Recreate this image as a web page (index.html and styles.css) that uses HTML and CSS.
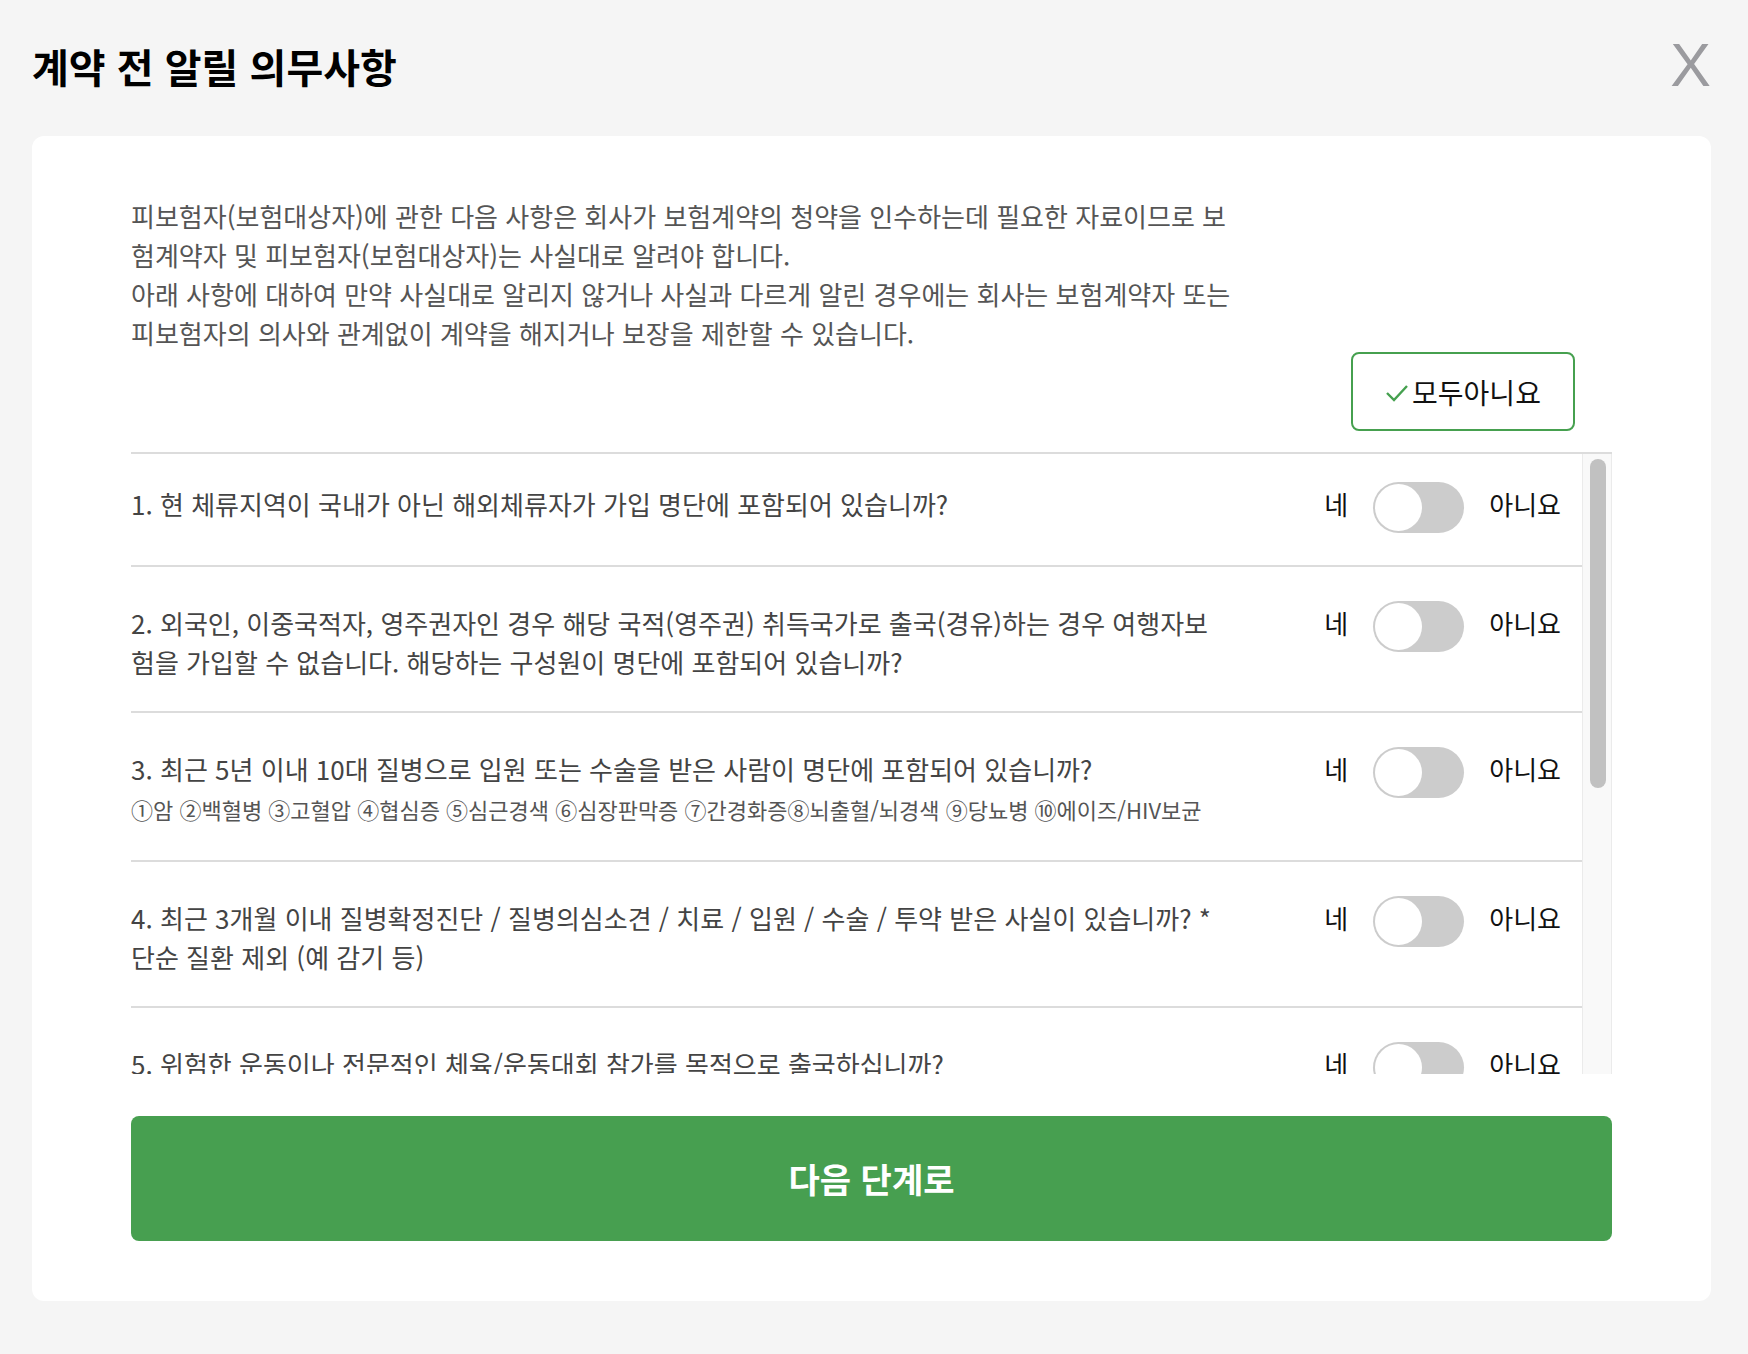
FILE: index.html
```html
<!DOCTYPE html>
<html lang="ko">
<head>
  <meta charset="UTF-8">
  <title>계약 전 알릴 의무사항</title>
  <meta name="viewport" content="width=device-width, initial-scale=1.0">
  <link rel="stylesheet" href="styles.css">
</head>
<body>
  <div class="page">
    <div class="header">
      <h1 class="title">계약 전 알릴 의무사항</h1>
      <button class="close-btn" type="button">X</button>
    </div>

    <div class="card">
      <p class="intro">피보험자(보험대상자)에 관한 다음 사항은 회사가 보험계약의 청약을 인수하는데 필요한 자료이므로 보험계약자 및 피보험자(보험대상자)는 사실대로 알려야 합니다.<br>아래 사항에 대하여 만약 사실대로 알리지 않거나 사실과 다르게 알린 경우에는 회사는 보험계약자 또는 피보험자의 의사와 관계없이 계약을 해지거나 보장을 제한할 수 있습니다.</p>

      <div class="all-no-row">
        <button class="all-no-btn" type="button">
          <svg class="check" viewBox="0 0 24 18" width="24" height="18"><polyline points="2,9 9,16 22,2" fill="none" stroke="#45a04f" stroke-width="2.4"/></svg>모두아니요
        </button>
      </div>

      <div class="q-box">
        <div class="q-list">
          <div class="q-item">
            <div class="q-text">1. 현 체류지역이 국내가 아닌 해외체류자가 가입 명단에 포함되어 있습니까?</div>
            <div class="q-answer"><span class="label">네</span><span class="switch"><span class="knob"></span></span><span class="label">아니요</span></div>
          </div>
          <div class="q-item">
            <div class="q-text">2. 외국인, 이중국적자, 영주권자인 경우 해당 국적(영주권) 취득국가로 출국(경유)하는 경우 여행자보험을 가입할 수 없습니다. 해당하는 구성원이 명단에 포함되어 있습니까?</div>
            <div class="q-answer"><span class="label">네</span><span class="switch"><span class="knob"></span></span><span class="label">아니요</span></div>
          </div>
          <div class="q-item">
            <div class="q-text">3. 최근 5년 이내 10대 질병으로 입원 또는 수술을 받은 사람이 명단에 포함되어 있습니까?
              <div class="q-sub">①암 ②백혈병 ③고혈압 ④협심증 ⑤심근경색 ⑥심장판막증 ⑦간경화증⑧뇌출혈/뇌경색 ⑨당뇨병 ⑩에이즈/HIV보균</div>
            </div>
            <div class="q-answer"><span class="label">네</span><span class="switch"><span class="knob"></span></span><span class="label">아니요</span></div>
          </div>
          <div class="q-item">
            <div class="q-text">4. 최근 3개월 이내 질병확정진단 / 질병의심소견 / 치료 / 입원 / 수술 / 투약 받은 사실이 있습니까? * 단순 질환 제외 (예 감기 등)</div>
            <div class="q-answer"><span class="label">네</span><span class="switch"><span class="knob"></span></span><span class="label">아니요</span></div>
          </div>
          <div class="q-item">
            <div class="q-text">5. 위험한 운동이나 전문적인 체육/운동대회 참가를 목적으로 출국하십니까?</div>
            <div class="q-answer"><span class="label">네</span><span class="switch"><span class="knob"></span></span><span class="label">아니요</span></div>
          </div>
        </div>
        <div class="scrollbar"><div class="thumb"></div></div>
      </div>

      <button class="next-btn" type="button">다음 단계로</button>
    </div>
  </div>
</body>
</html>
```

FILE: styles.css
```css
* { box-sizing: border-box; }
html, body { margin: 0; }
body {
  background: #f5f5f5;
  font-family: "Noto Sans CJK KR", "Noto Sans", sans-serif;
  color: #222;
}
button { font-family: inherit; cursor: pointer; }

.page { padding: 0 37px 54px 32px; }

.header {
  height: 136px;
  display: flex; align-items: center; justify-content: space-between;
}
.title {
  margin: 0 0 4px; font-size: 40px; font-weight: 700; color: #000;
}
.close-btn {
  border: none; background: none; padding: 0;
  font-family: "Liberation Sans", Arial, sans-serif;
  font-size: 61px; line-height: 1; color: #9b9b9f;
  margin-top: -6px;
}

.card {
  background: #fff; border-radius: 12px;
  padding: 60px 99px 60px 99px;
}

.intro {
  margin: 0; width: 1116px;
  font-size: 26px; line-height: 39px; color: #555;
  word-break: break-all;
}

.all-no-row { display: flex; justify-content: flex-end; padding-right: 37px; margin-bottom: 21px; }
.all-no-btn {
  width: 224px; height: 79px;
  border: 2px solid #46a04f; border-radius: 8px; background: #fff;
  display: flex; align-items: center; justify-content: center; gap: 3px;
  font-size: 28px; color: #111; padding: 0;
}
.check { margin-top: 2px; }

.q-box {
  display: flex; height: 622px;
  border-top: 2px solid #dcdcdc;
}
.q-list { flex: 1; overflow: hidden; }
.scrollbar {
  width: 30px; padding: 5px 5px 0 7px;
  background: #f9f9f9;
  border-left: 1px solid #ebebeb; border-right: 1px solid #ebebeb;
}
.thumb { height: 329px; background: #c1c1c1; border-radius: 8px; }

.q-item {
  display: flex; align-items: flex-start;
  padding: 36px 21px 30px 0;
  border-bottom: 2px solid #dcdcdc;
}
.q-item:first-child { padding-top: 30px; padding-bottom: 32px; }
.q-text {
  width: 1090px;
  font-size: 26px; line-height: 39px; color: #444;
  word-break: break-all;
}
.q-sub { font-size: 22px; line-height: 42px; color: #555; }

.q-answer {
  margin-left: auto; margin-top: -2px;
  display: flex; align-items: center; gap: 25px;
  font-size: 26px; color: #111;
}
.label { margin-bottom: 9px; }
.switch {
  width: 91px; height: 51px; padding: 2px;
  background: #ccc; border-radius: 26px;
  display: flex;
}
.knob {
  width: 47px; height: 47px; border-radius: 50%; background: #fff;
}

.next-btn {
  display: block; width: 100%; height: 125px; margin-top: 42px;
  border: none; border-radius: 8px; background: #479f50;
  color: #fff; font-size: 34px; font-weight: 700;
}
```
